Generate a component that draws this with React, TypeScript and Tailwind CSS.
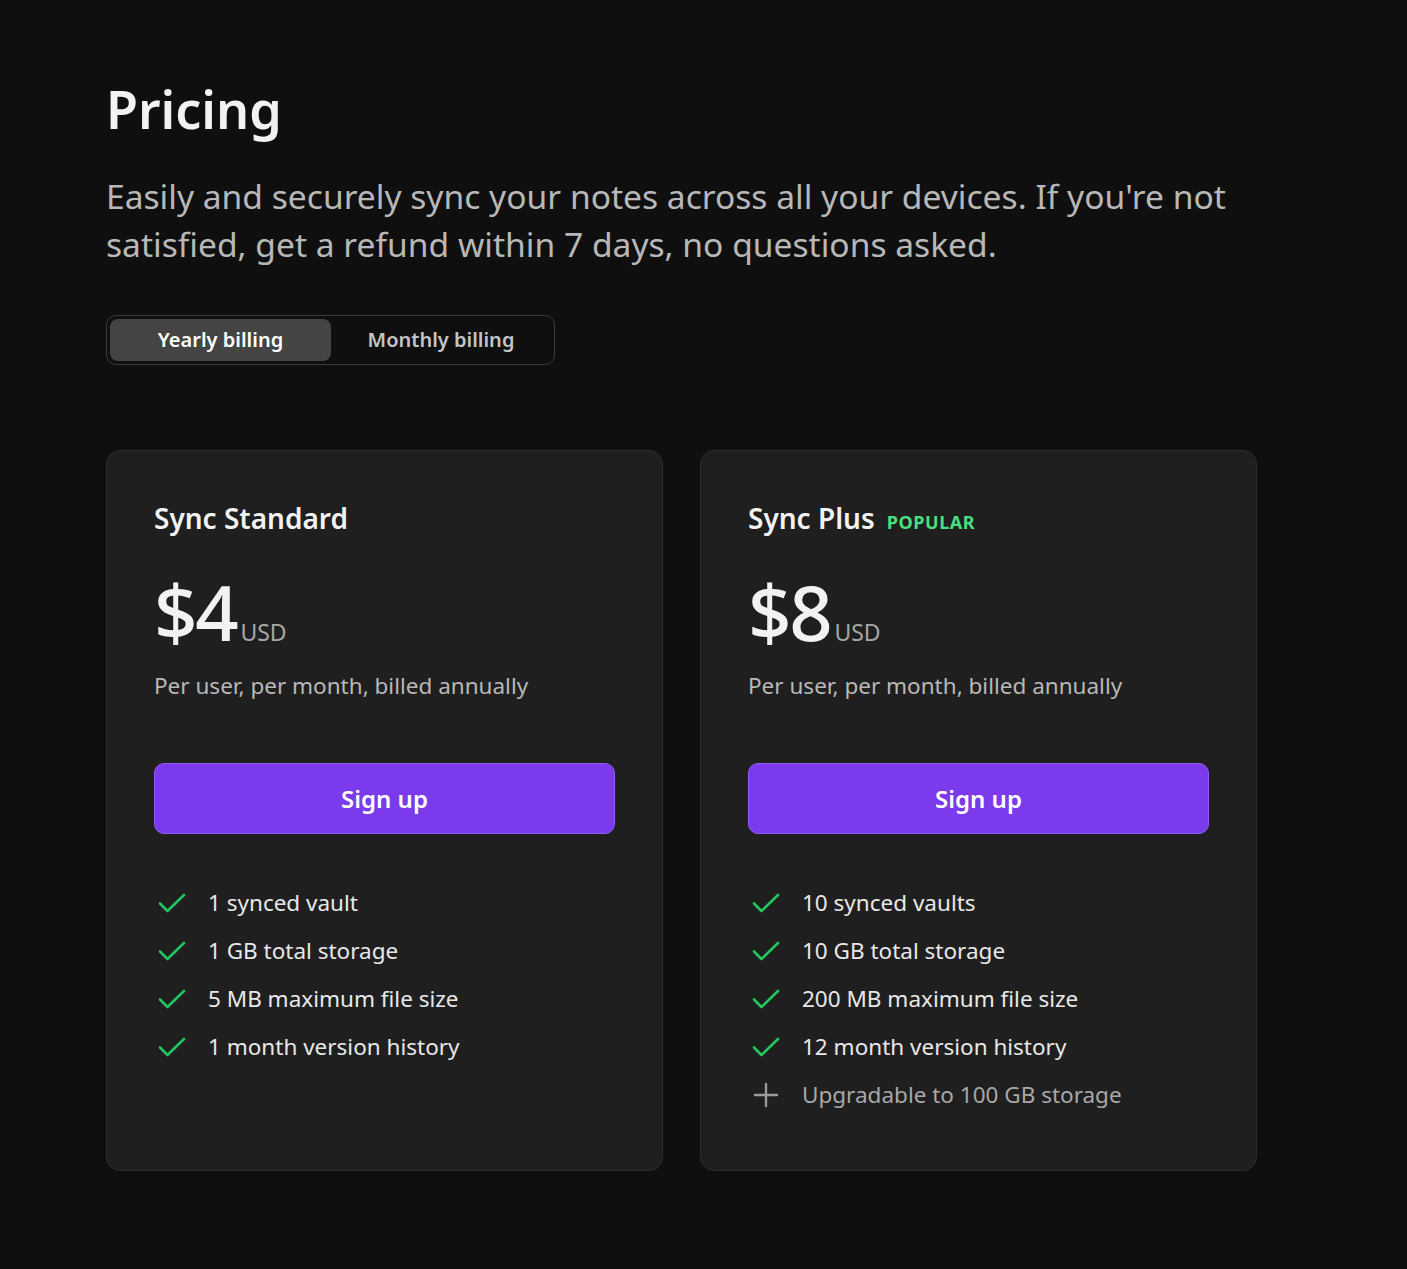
import React from "react";

type Plan = {
  name: string;
  popular?: boolean;
  price: string;
  features: string[];
  extra?: string;
};

const plans: Plan[] = [
  {
    name: "Sync Standard",
    price: "$4",
    features: ["1 synced vault", "1 GB total storage", "5 MB maximum file size", "1 month version history"],
  },
  {
    name: "Sync Plus",
    popular: true,
    price: "$8",
    features: ["10 synced vaults", "10 GB total storage", "200 MB maximum file size", "12 month version history"],
    extra: "Upgradable to 100 GB storage",
  },
];

function CheckIcon() {
  return (
    <svg width="28" height="20" viewBox="0 0 28 20" fill="none" className="ml-[4px]">
      <path d="M2 10.5 L9.5 18 L26 2" stroke="#22c55e" strokeWidth="2.6" strokeLinecap="round" strokeLinejoin="round" />
    </svg>
  );
}

function PlusIcon() {
  return (
    <svg width="26" height="26" viewBox="0 0 26 26" fill="none" className="ml-[5px]">
      <path d="M13 2 V24 M2 13 H24" stroke="#9a9a9a" strokeWidth="2.4" strokeLinecap="round" />
    </svg>
  );
}

function PlanCard({ plan }: { plan: Plan }) {
  return (
    <div className="flex-1 rounded-[14px] border border-[#2c2c2c] bg-[#1f1f1f] px-[47px] pt-[47px] pb-[51px]">
      {/* Title */}
      <div className="flex items-baseline gap-[12px]">
        <h2 className="text-[28px] font-semibold leading-[40px] text-[#f2f2f2]">{plan.name}</h2>
        {plan.popular && (
          <span className="text-[18px] font-bold tracking-[0.03em] text-[#4ade80]">POPULAR</span>
        )}
      </div>

      {/* Price */}
      <div className="mt-[34px] flex items-baseline">
        <span className="text-[76px] font-medium leading-[80px] tracking-[-0.03em] text-[#f2f2f2]">{plan.price}</span>
        <span className="ml-[4px] text-[23px] text-[#a6a6a6]">USD</span>
      </div>
      <p className="mt-[18px] text-[22.5px] leading-[32px] text-[#b8b8b8]">Per user, per month, billed annually</p>

      <button className="mt-[61px] flex h-[71px] w-full items-center justify-center rounded-[10px] border border-[#8f5cf2] bg-[#7c3aed] text-[24px] font-semibold text-white">
        Sign up
      </button>

      {/* Features */}
      <ul className="mt-[45px] flex flex-col">
        {plan.features.map((f) => (
          <li key={f} className="flex h-[48px] items-center">
            <div className="w-[54px]">
              <CheckIcon />
            </div>
            <span className="text-[22.5px] text-[#e8e8e8]">{f}</span>
          </li>
        ))}
        {plan.extra && (
          <li className="flex h-[48px] items-center">
            <div className="w-[54px]">
              <PlusIcon />
            </div>
            <span className="text-[22.5px] text-[#a8a8a8]">{plan.extra}</span>
          </li>
        )}
      </ul>
    </div>
  );
}

export default function App() {
  return (
    <div
      className="min-h-[1269px] w-full bg-[#0f0f0f] text-white"
      style={{ fontFamily: '"Noto Sans", "Open Sans", sans-serif' }}
    >
      <div className="w-[1151px] pl-[106px] pt-[69px] box-content">
        <h1 className="text-[52px] font-semibold leading-[80px] text-[#f2f2f2]">Pricing</h1>
        <p className="mt-[23px] text-[33.6px] leading-[48px] text-[#b8b8b8]">
          Easily and securely sync your notes across all your devices. If you're not satisfied, get a refund within
          7 days, no questions asked.
        </p>

        {/* Billing toggle */}
        <div className="mt-[47px] inline-flex h-[50px] w-[449px] items-center rounded-[10px] border border-[#3a3a3a] p-[3px]">
          <div className="flex h-full w-[221px] items-center justify-center rounded-[8px] bg-[#444444] text-[20px] font-semibold text-white">
            Yearly billing
          </div>
          <div className="flex h-full flex-1 items-center justify-center text-[20px] font-semibold text-[#c4c4c4]">
            Monthly billing
          </div>
        </div>

        {/* Plans */}
        <div className="mt-[85px] flex gap-[37px]">
          {plans.map((p) => (
            <PlanCard key={p.name} plan={p} />
          ))}
        </div>
      </div>
    </div>
  );
}
